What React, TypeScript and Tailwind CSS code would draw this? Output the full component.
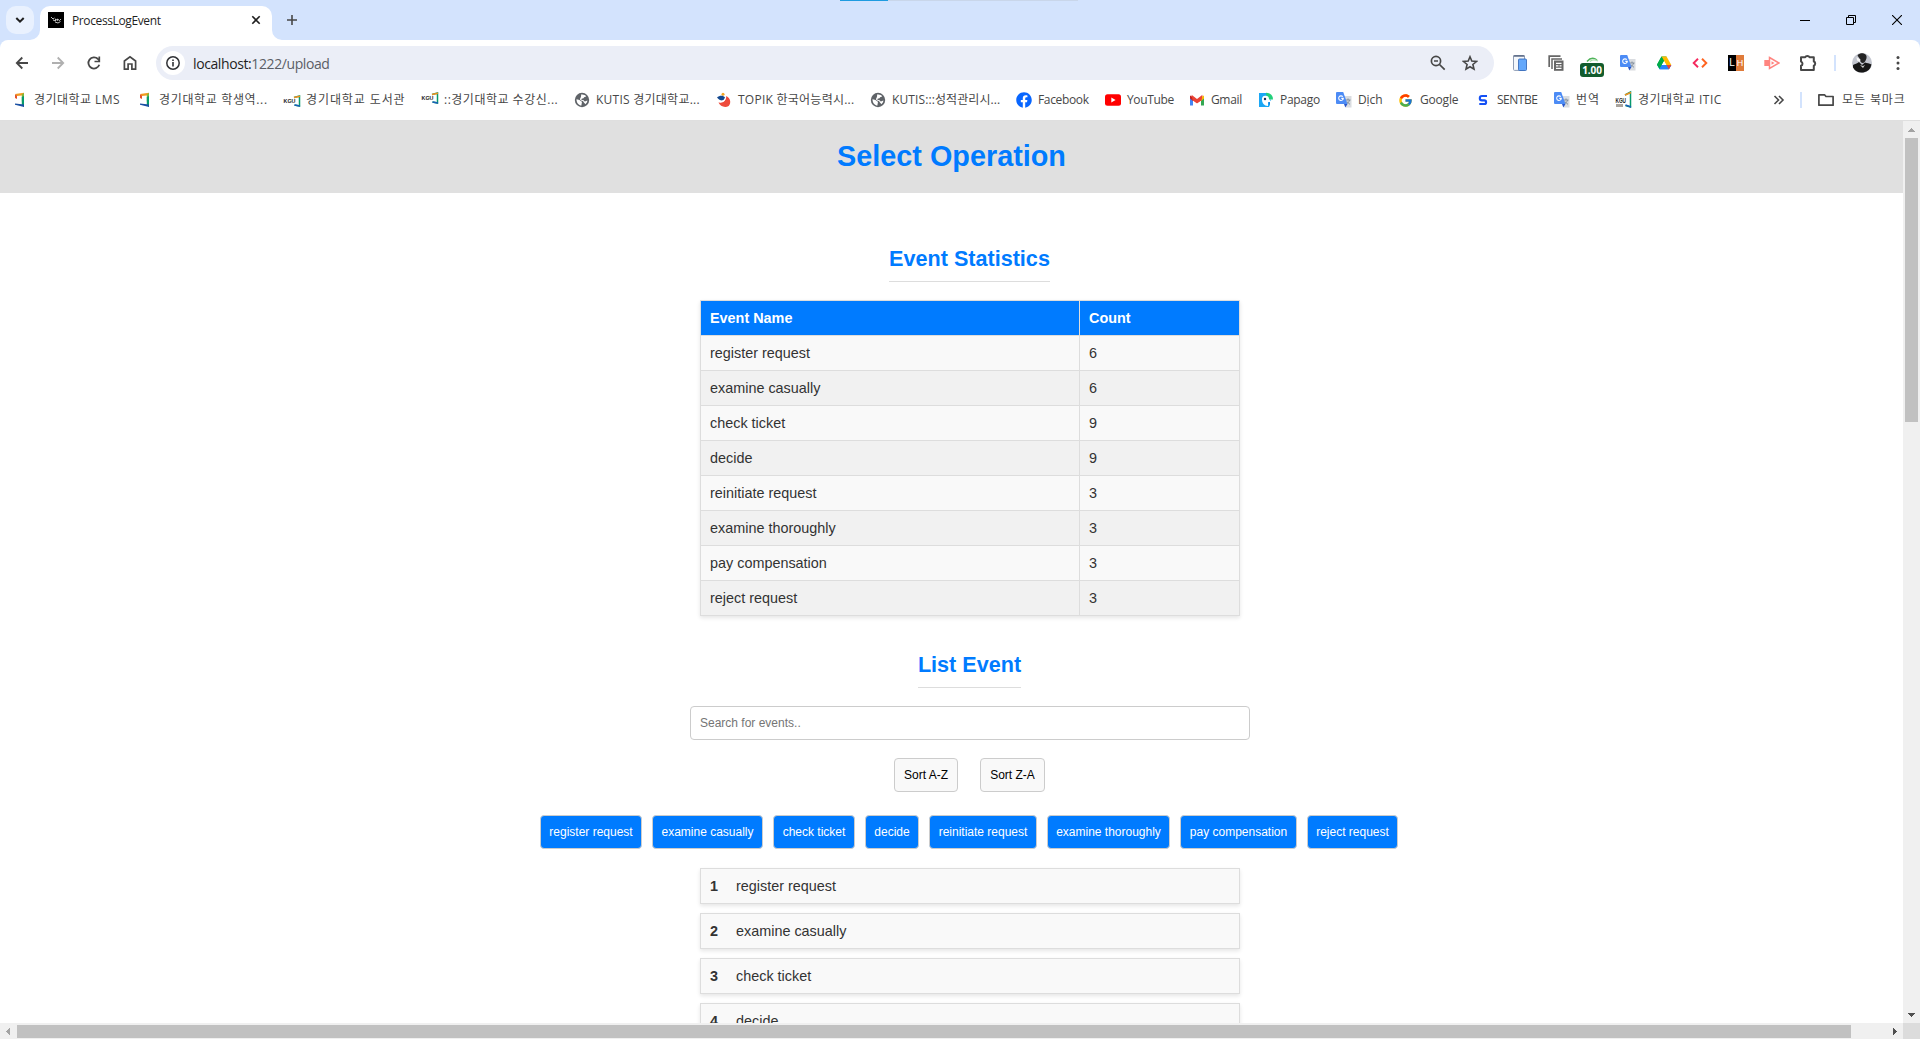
import React from "react";
import { FaFacebook } from "react-icons/fa";
import { FcGoogle } from "react-icons/fc";

const UI = "font-['Open_Sans','Noto_Sans_CJK_KR',sans-serif]";

function Svg({ s = 16, vb = "0 0 16 16", children }: { s?: number; vb?: string; children: React.ReactNode }) {
  return (
    <svg width={s} height={s} viewBox={vb} fill="none" className="block shrink-0">
      {children}
    </svg>
  );
}

function KguMark() {
  return (
    <Svg>
      <path d="M3 2 12 .8v2.4L5 4z" fill="#f39a1f" />
      <path d="M3 2.2 5 3.6V7L3 6z" fill="#e2522b" />
      <path d="M9.800 2.400 12 1v9l-2.200-.5z" fill="#79b83c" />
      <path d="M9.800 5 12 4V15l-2.200-2z" fill="#079a6c" />
      <path d="M3 11.500 12 12.600V15L3 12.800z" fill="#1a4fa3" />
    </Svg>
  );
}

function KguText({ variant }: { variant: "low" | "high" | "tall" }) {
  const tall = variant === "tall";
  const y = variant === "high" ? -3 : 0;
  return (
    <svg width="16" height="16" viewBox="0 0 16 16" className="block shrink-0 overflow-visible">
      <g transform={`translate(0 ${y})`}>
        <text x="-.5" y={tall ? 10.5 : 10.6} fontSize={tall ? 6.5 : 5} fontWeight="900" textLength={tall ? 10.5 : 12} lengthAdjust="spacingAndGlyphs" fill="#222" fontFamily="Liberation Sans">
          KGU
        </text>
        {tall && <rect x="0" y="12" width="7" height="3" fill="#a9a39c" />}
        <path d={tall ? "M9 3 14.500 0v15l-5-1.500" : "M10 5.500 15.500 4v10l-5-1"} fill="none" stroke="#079a6c" strokeWidth="1.500" />
        <path d={tall ? "M9 3 15 .5" : "M10 5.500 16 4.200"} stroke="#f0901f" strokeWidth="1.500" />
        <path d={tall ? "M9.500 13 15 15" : "M10.500 13 16 14"} stroke="#1a5fb8" strokeWidth="1.500" />
      </g>
    </svg>
  );
}

function Globe() {
  return (
    <Svg>
      <circle cx="8" cy="8" r="7.2" fill="#5f6368" />
      <path d="M2.500 7.200c1.500.3 3 .4 3.600 1.400.5 1 1.800.6 1.800 1.700 0 1-.5 1.600-.4 3.200C5 13.500 2.400 11 2.500 7.200z" fill="#fff" />
      <path d="M7 2.600c2-.6 4.200.3 5.200 1.600-.8.8-2.200.6-2.400 1.600-.2.9-1.800.4-2.300 1.100-.6.7.3 1 1.300 1 1.400 0 1.200 1.500 2.200 1.500.8 0 1.300-.8 2.400-.9-.2 1.600-1 3-2.200 3.800-.3-1.500-1.300-1.300-1.700-2.600-.5-1.200-2.600-.5-3.300-1.900C5.500 6.400 7.700 5.400 7 2.600z" fill="#fff" />
    </Svg>
  );
}

function Topik() {
  return (
    <Svg>
      <circle cx="7" cy="2.200" r="1.500" fill="#f5a623" />
      <path d="M1 5.500C3.500 3 7.500 3.200 9 5.500 8.500 9.500 4 9.500 1 5.500z" fill="#12478f" />
      <path d="M2.500 10.500c4.500.7 7.500-1.200 7.800-6.500C14.500 6 15.500 11 12.700 14 9 16 4 14.500 2.500 10.500z" fill="#ee4b3c" />
      <path d="M3.500 9.700c3 .3 5.500-1.200 6.200-4.500" stroke="#fff" strokeWidth="1.100" />
    </Svg>
  );
}

function Youtube() {
  return (
    <Svg>
      <rect x="0" y="2.300" width="16" height="11.400" rx="2.500" fill="#f00" />
      <path d="M6.300 5.600v4.800L10.600 8z" fill="#fff" />
    </Svg>
  );
}

function Gmail() {
  return (
    <Svg>
      <path d="M1 4v9.500h3V7.500z" fill="#4285f4" />
      <path d="M15 4v9.500h-3V7.500z" fill="#34a853" />
      <path d="M1 3.500 4 5v4L1 6.500z" fill="#c5221f" />
      <path d="M15 3.500 12 5v4l3-2.500z" fill="#fbbc04" />
      <path d="M2.500 2.700 8 7l5.500-4.300L12.500 8.500 8 11.500 3.700 8.500z" fill="#ea4335" />
      <path d="M4 8.900V13.500H12V8.900L8 12z" fill="#fff" />
    </Svg>
  );
}

function Papago() {
  return (
    <Svg>
      <path d="M1 1h8l1.500 3L13.500 9.500 11 15H1z" fill="#1ba7f5" />
      <path d="M8 .8c4 0 7 2.500 7 6.700H9z" fill="#22d07a" />
      <path d="M4 7.500A3.500 3.500 0 0 1 11 7l2.500 2.700-3.500.6V14C6 14 4 11 4 7.500z" fill="#fff" />
      <circle cx="7" cy="7" r="1.200" fill="#1c2f5a" />
      <path d="m10 10.500 3.500-.6-1 3.600z" fill="#127de0" />
      <path d="M12 9.500 16 8v8h-4z" fill="#fff" />
    </Svg>
  );
}

function Translate() {
  return (
    <Svg>
      <path d="M6 4h9.500v11.500H10z" fill="#d9dce0" />
      <path d="M9.500 8h5M12 6.500V8M13.600 8c-.6 2-2 3.300-3.200 4M11 9.500c.7 1.200 1.700 2 3 2.800" stroke="#7b8794" strokeWidth=".9" />
      <path d="M1 0h6.200L11.500 12H1a1 1 0 0 1-1-1V1a1 1 0 0 1 1-1z" fill="#4c8bf5" />
      <path d="M8 12h3.500L9.300 15.500z" fill="#2a56c6" />
      <path d="M6.800 4.700A2.300 2.300 0 1 0 7.300 6.400H5.300" stroke="#fff" strokeWidth="1.100" />
    </Svg>
  );
}

function Sentbe() {
  return (
    <Svg>
      <path d="M12 4H7a2.200 2.200 0 0 0 0 4.400h2.300a1.800 1.800 0 0 1 0 3.600H4.300" stroke="#1450f5" strokeWidth="2.100" />
    </Svg>
  );
}

const bookmarks: { w: string; t: string; label: string; icon: React.ReactNode }[] = [
  { w: "w-[125px]", t: "tracking-[0.45px]", label: "경기대학교 LMS", icon: <KguMark /> },
  { w: "w-[147px]", t: "tracking-[0.65px]", label: "경기대학교 학생역...", icon: <KguMark /> },
  { w: "w-[138px]", t: "tracking-[0.9px]", label: "경기대학교 도서관", icon: <KguText variant="low" /> },
  { w: "w-[152px]", t: "tracking-[0.5px]", label: "::경기대학교 수강신...", icon: <KguText variant="high" /> },
  { w: "w-[142px]", t: "tracking-[0.25px]", label: "KUTIS 경기대학교...", icon: <Globe /> },
  { w: "w-[154px]", t: "tracking-[0.25px]", label: "TOPIK 한국어능력시...", icon: <Topik /> },
  { w: "w-[146px]", t: "tracking-[0.1px]", label: "KUTIS:::성적관리시...", icon: <Globe /> },
  { w: "w-[89px]", t: "tracking-[-0.35px]", label: "Facebook", icon: <FaFacebook size={16} color="#0866ff" className="shrink-0" /> },
  { w: "w-[84px]", t: "tracking-[-0.35px]", label: "YouTube", icon: <Youtube /> },
  { w: "w-[69px]", t: "tracking-[-0.35px]", label: "Gmail", icon: <Gmail /> },
  { w: "w-[78px]", t: "tracking-[-0.3px]", label: "Papago", icon: <Papago /> },
  { w: "w-[62px]", t: "tracking-[-0.1px]", label: "Dịch", icon: <Translate /> },
  { w: "w-[77px]", t: "tracking-[-0.2px]", label: "Google", icon: <FcGoogle size={15} className="mr-px shrink-0" /> },
  { w: "w-[79px]", t: "tracking-[-0.5px]", label: "SENTBE", icon: <Sentbe /> },
  { w: "w-[62px]", t: "tracking-[1px]", label: "번역", icon: <Translate /> },
  { w: "w-[110px]", t: "tracking-[0.45px]", label: "경기대학교 ITIC", icon: <KguText variant="tall" /> },
];

const extensions: React.ReactNode[] = [
  <Svg>
    <rect x="1.500" y=".6" width="11" height="14.800" rx="1" fill="#f4f7fb" stroke="#8f9db5" />
    <path d="M1.500 1h11" stroke="#3f4f6d" strokeWidth="1.200" />
    <rect x="6.500" y="4" width="8" height="11.500" rx="1" fill="#64a8fb" stroke="#3a6dbb" strokeWidth=".9" />
  </Svg>,
  <Svg>
    <path d="M1.200 12V1.200H12.500" stroke="#666" strokeWidth="1.700" />
    <path d="M4 14V4H14" stroke="#666" strokeWidth="1.500" />
    <rect x="6" y="5.500" width="9.500" height="10.300" fill="#666" />
    <path d="M8 8.300h5.500M8 10.800h2.500M8 13.300h5.500M11.500 10.800h2" stroke="#fff" strokeWidth="1.200" />
  </Svg>,
  <div className="relative h-4 w-4">
    <Svg>
      <path d="M3 6.500c3-3.500 6-4.500 10-1.500" stroke="#4fb35a" strokeWidth="1.500" />
      <path d="M6 6.500c2-2 4-2.500 8-.5" stroke="#a9dfac" strokeWidth="1.300" />
    </Svg>
    <div className="absolute top-2 -left-1 flex h-[14px] w-6 items-center justify-center rounded-[3px] bg-[#125c2d] font-['Open_Sans',sans-serif] text-[10px] font-bold tracking-[-0.1px] text-white">1.00</div>
  </div>,
  <Translate />,
  <Svg>
    <path d="M5.500 1.500h5L8 6 3.700 13.500 1 9.500z" fill="#00ac47" />
    <path d="M5.500 1.500h5L15.300 10h-5z" fill="#ffba00" />
    <path d="M1 9.800 3.500 14.200h9.400L15.300 10H6z" fill="#2684fc" />
    <path d="M5.500 1.500 1 9.700l2.500 4.300L8 6z" fill="#00ac47" />
    <path d="M3.500 14.200 6 10h9.300l-2.400 4.200z" fill="#2684fc" />
    <path d="M10.500 10h4.800l-2.400 4.200z" fill="#ea4335" />
    <path d="m8 6.200 2.200 3.800H5.800z" fill="#fff" />
  </Svg>,
  <Svg>
    <path d="M6 3.800 1.700 8 6 12.200" stroke="#f5295d" strokeWidth="1.900" />
    <path d="M10 3.800 14.300 8 10 12.200" stroke="#ff6420" strokeWidth="1.900" />
  </Svg>,
  <div className="flex h-4 w-4 font-['Liberation_Sans',sans-serif] text-[10px] leading-4">
    <span className="w-2 bg-black text-center text-white">L</span>
    <span className="w-2 bg-[#df7b3a] text-center text-[9px] text-white">H</span>
  </div>,
  <Svg>
    <rect x=".3" y="5" width="5" height="6" fill="#ff8580" />
    <path d="M5.500 2.500 15 8l-9.500 5.500z" stroke="#ff8580" strokeWidth="1.500" />
    <path d="M7.500 6.300 10.500 8l-3 1.700z" fill="#ff8580" />
  </Svg>,
  <Svg s={20} vb="0 0 20 20">
    <path d="M3 4.200h4.200a2.300 2 0 0 1 4.300 0h4.300v4.300a2 2.200 0 0 1 0 4.200V17H3v-4.200a2.300 2.300 0 0 0 0-4.300z" stroke="#474747" strokeWidth="2" strokeLinejoin="round" />
  </Svg>,
];

const stats: [string, number][] = [
  ["register request", 6],
  ["examine casually", 6],
  ["check ticket", 9],
  ["decide", 9],
  ["reinitiate request", 3],
  ["examine thoroughly", 3],
  ["pay compensation", 3],
  ["reject request", 3],
];

const listed = stats.slice(0, 4);

const buttonWidths = ["w-[102px]", "w-[111px]", "w-[82px]", "w-[54px]", "w-[108px]", "w-[123px]", "w-[117px]", "w-[91px]"];

function TabStrip() {
  return (
    <div className="relative flex h-10 bg-[#d3e3fd]">
      <div className="mt-[6px] ml-[6px] flex h-7 w-7 items-center justify-center rounded-[10px] bg-[#e9f1fe]">
        <Svg s={10} vb="0 0 10 10">
          <path d="M1.300 3 5 6.700 8.700 3" stroke="#1f1f1f" strokeWidth="2" />
        </Svg>
      </div>
      <div className="relative mt-[6px] ml-[6px] flex h-[34px] w-[232px] items-center rounded-t-[10px] bg-white pr-[10px] pb-[6px] pl-2">
        <svg className="absolute bottom-0 -left-[10px]" width="10" height="10">
          <path d="M10 0v10H0A10 10 0 0 0 10 0z" fill="#fff" />
        </svg>
        <svg className="absolute -right-[10px] bottom-0" width="10" height="10">
          <path d="M0 0v10h10A10 10 0 0 1 0 0z" fill="#fff" />
        </svg>
        <Svg>
          <path d="M0 0h16v16H0z" fill="#000" />
          <path d="m3 5 2 2 1.500-1M5 8l2.500 1V7l2 1.500V7l2 1.500L13 7M7 10l3 1 2.500-1.500" stroke="#d9d9d9" strokeWidth=".9" />
        </Svg>
        <span className="ml-2 flex-1 pt-px text-[12px] leading-4 tracking-[-0.38px] text-[#1f1f1f]">ProcessLogEvent</span>
        <Svg s={12} vb="0 0 12 12">
          <path d="m2.300 2.300 7.400 7.400M9.700 2.300 2.300 9.700" stroke="#1f1f1f" strokeWidth="1.600" />
        </Svg>
      </div>
      <div className="ml-[14px] flex w-3 items-center">
        <Svg s={12} vb="0 0 12 12">
          <path d="M6 1v10M1 6h10" stroke="#474747" strokeWidth="1.600" />
        </Svg>
      </div>
      <div className="absolute top-0 left-[840px] flex h-px w-[238px] bg-[#c9d6ea]">
        <div className="w-12 bg-[#1e9be0]" />
      </div>
      <div className="ml-auto flex items-center">
        <div className="flex w-[46px] justify-center">
          <div className="h-px w-[10px] bg-black" />
        </div>
        <div className="flex w-[46px] justify-center">
          <Svg s={10} vb="0 0 10 10">
            <path d="M.5 2.500h7v7h-7zM2.500 2.500v-2h7v7h-2" stroke="#000" />
          </Svg>
        </div>
        <div className="flex w-[46px] justify-center">
          <Svg s={10} vb="0 0 10 10">
            <path d="m0 0 10 10M10 0 0 10" stroke="#000" strokeWidth="1.100" />
          </Svg>
        </div>
      </div>
    </div>
  );
}

function Cell({ children }: { children: React.ReactNode }) {
  return <div className="flex w-9 shrink-0 items-center justify-center">{children}</div>;
}

function Toolbar() {
  return (
    <div className="bg-[#d3e3fd]">
      <div className="flex h-10 rounded-t-[8px] bg-white pt-[6px] pl-1">
        <Cell>
          <Svg>
            <path d="M14 8H3M8.300 2.500 2.800 8 8.300 13.500" stroke="#474747" strokeWidth="1.800" />
          </Svg>
        </Cell>
        <Cell>
          <Svg>
            <path d="M2 8h11M7.700 2.500 13.200 8 7.700 13.500" stroke="#b0b0b0" strokeWidth="1.800" />
          </Svg>
        </Cell>
        <Cell>
          <Svg>
            <path d="M13.300 9.800A5.600 5.600 0 1 1 12 4l1.300 1.500" stroke="#474747" strokeWidth="1.800" />
            <path d="M13.300 1.500v5H8.500" stroke="#474747" strokeWidth="1.700" />
          </Svg>
        </Cell>
        <Cell>
          <Svg>
            <path d="M2.400 14.200V6L8 1.800 13.600 6v8.200H9.900V9H6.100v5.200z" stroke="#474747" strokeWidth="1.700" />
          </Svg>
        </Cell>
        <div className="ml-2 flex h-[34px] w-[1338px] items-center rounded-full bg-[#ebeef7] pr-4 pl-[5px]">
          <div className="flex h-6 w-6 items-center justify-center rounded-full bg-white">
            <Svg>
              <circle cx="8" cy="8" r="6.200" stroke="#303236" strokeWidth="1.500" />
              <path d="M8 7v4.500M8 4.400V6" stroke="#303236" strokeWidth="1.600" />
            </Svg>
          </div>
          <div className="ml-2 text-[14px] tracking-[-0.4px] text-[#5b5e66]">
            <span className="text-[#1f1f1f]">localhost:</span>1222/upload
          </div>
          <div className="ml-auto flex items-center gap-4">
            <Svg>
              <circle cx="6" cy="6" r="4.600" stroke="#474747" strokeWidth="1.700" />
              <path d="M4 6h4M9.500 9.500l5.200 5.200" stroke="#474747" strokeWidth="1.700" />
            </Svg>
            <Svg>
              <path d="m8 1.800 1.800 4.300 4.700.4-3.600 3 1.100 4.600L8 11.700l-4 2.400 1.100-4.600-3.600-3 4.700-.4z" stroke="#474747" strokeWidth="1.600" />
            </Svg>
          </div>
        </div>
        <div className="ml-2 flex h-[34px]">
          {extensions.map((e, i) => (
            <Cell key={i}>{e}</Cell>
          ))}
        </div>
        <div className="mt-[9px] ml-2 h-4 w-[2px] bg-[#d3e3fd]" />
        <div className="ml-2 flex h-[34px]">
          <Cell>
            <Svg s={20} vb="0 0 20 20">
              <circle cx="10" cy="10" r="10" fill="#c3c6cf" />
              <path d="M1 12c2-1.500 4-1 6-3l3 3 3-2.500c2 .5 4 1 6.500 2A10 10 0 0 1 1 14.500z" fill="#171717" />
              <path d="M5.500 2.500C7 .5 9 .2 11 .3c3 .5 4 2.500 3.500 5C13.500 8.500 12.500 10 10.500 10 8.500 9.500 8 8 7.500 5.500z" fill="#242424" />
              <path d="m4.500 4 4 2.500-.5 2.500-3-1.500z" fill="#f4f4f4" />
              <path d="m8 12 3 1 2-1-2 3z" fill="#ccc" />
            </Svg>
          </Cell>
          <Cell>
            <Svg>
              <circle cx="8" cy="2.500" r="1.500" fill="#474747" />
              <circle cx="8" cy="8" r="1.500" fill="#474747" />
              <circle cx="8" cy="13.500" r="1.500" fill="#474747" />
            </Svg>
          </Cell>
        </div>
      </div>
    </div>
  );
}

function BookmarkBar() {
  return (
    <div className="flex h-10 items-center bg-white pl-[12px] text-[12px] text-[#474747]">
      {bookmarks.map((b, i) => (
        <div key={i} className={`flex shrink-0 items-center gap-[6px] ${b.w}`}>
          {b.icon}
          <span className={`leading-4 whitespace-nowrap ${b.t}`}>{b.label}</span>
        </div>
      ))}
      <div className="ml-auto flex items-center pr-[14px]">
        <Svg s={12} vb="0 0 12 12">
          <path d="m1.500 2 4 4-4 4M6 2l4 4-4 4" stroke="#474747" strokeWidth="1.600" />
        </Svg>
        <div className="ml-[15px] h-4 w-[2px] bg-[#d3e3fd]" />
        <div className="ml-4">
          <Svg>
            <path d="M.9 3v10.200h14.200V4.500H8L6.500 2.800H.9z" stroke="#474747" strokeWidth="1.700" strokeLinejoin="round" />
          </Svg>
        </div>
        <span className="ml-2 w-[64px] leading-4 tracking-[0.9px] whitespace-nowrap">모든 북마크</span>
      </div>
    </div>
  );
}

function Page() {
  return (
    <main className="h-full min-w-0 flex-1 overflow-hidden bg-white font-['Liberation_Sans',Arial,sans-serif] text-[14.4px] text-[#333]">
      <header className="flex h-[72px] justify-center bg-[#e0e0e0] pt-[19px] text-[28.8px] leading-[33px] font-bold text-[#007bff]">
        <h1>Select Operation</h1>
      </header>
      <div className="flex w-[1939px] flex-col items-center pt-[53px]">
        <h2 className="border-b border-[#ddd] pb-[10px] text-[21.6px] leading-[25px] font-bold text-[#007bff]">Event Statistics</h2>
        <table className="mt-[18px] mr-[-1px] w-[540px] table-fixed border-collapse text-left shadow-[0_2px_4px_rgba(0,0,0,0.1)]">
          <colgroup>
            <col className="w-[379px]" />
            <col />
          </colgroup>
          <thead>
            <tr className="h-[35px] bg-[#007bff] text-white">
              <th className="border border-[#ddd] px-[9px] pt-[2px] pb-0 font-bold">Event Name</th>
              <th className="border border-[#ddd] px-[9px] pt-[2px] pb-0 font-bold">Count</th>
            </tr>
          </thead>
          <tbody>
            {stats.map(([name, n]) => (
              <tr key={name} className="h-[35px] bg-[#f9f9f9] even:bg-[#f1f1f1]">
                <td className="border border-[#ddd] px-[9px] pt-[2px] pb-0">{name}</td>
                <td className="border border-[#ddd] px-[9px] pt-[2px] pb-0">{n}</td>
              </tr>
            ))}
          </tbody>
        </table>
        <h2 className="mt-[36px] border-b border-[#ddd] pb-[10px] text-[21.6px] leading-[25px] font-bold text-[#007bff]">List Event</h2>
        <input
          className="mt-[18px] mr-[-1px] h-[34px] w-[560px] rounded-[4px] border border-[#ccc] bg-white px-[9px] text-[12px] placeholder:text-[#757575]"
          placeholder="Search for events.."
        />
        <div className="mt-[18px] flex h-[34px] gap-[22px] text-[12px] text-black">
          <button className="w-16 rounded-[4px] border border-[#ccc] bg-[#f9f9f9] whitespace-nowrap">Sort A-Z</button>
          <button className="w-[65px] rounded-[4px] border border-[#ccc] bg-[#f9f9f9] whitespace-nowrap">Sort Z-A</button>
        </div>
        <div className="mt-[23px] mr-px flex h-[34px] gap-[10px] text-[12px] text-white">
          {stats.map(([name], i) => (
            <button key={name} className={`rounded-[4px] border border-[#ccc] bg-[#007bff] whitespace-nowrap ${buttonWidths[i]}`}>
              {name}
            </button>
          ))}
        </div>
        <ol className="mt-[19px] mr-[-1px] flex w-[540px] flex-col gap-[9px]">
          {listed.map(([name], i) => (
            <li key={name} className="flex h-9 items-center border border-[#ddd] bg-[#f9f9f9] px-[9px] pt-[2px] shadow-[0_2px_4px_rgba(0,0,0,0.1)]">
              <b className="w-[26px]">{i + 1}</b>
              <span>{name}</span>
            </li>
          ))}
        </ol>
      </div>
    </main>
  );
}

export default function App() {
  return (
    <div className={`flex h-[1039px] w-[1920px] flex-col overflow-hidden bg-white ${UI}`}>
      <TabStrip />
      <Toolbar />
      <BookmarkBar />
      <div className="h-px shrink-0 bg-[#dfdfdf]" />
      <div className="flex h-[902px] shrink-0">
        <Page />
        <div className="flex w-[17px] flex-col items-center bg-[#f0f0f0]">
          <svg width="17" height="17" className="shrink-0" shapeRendering="crispEdges">
            <path d="M5 11h7L8.500 7z" fill="#a3a3a3" />
          </svg>
          <div className="h-[284px] w-[13px] bg-[#c1c1c1]" />
          <svg width="17" height="17" className="mt-auto shrink-0" shapeRendering="crispEdges">
            <path d="M5 7h7l-3.500 4z" fill="#505050" />
          </svg>
        </div>
      </div>
      <div className="flex h-4 shrink-0 bg-[#f0f0f0]">
        <svg width="17" height="16" shapeRendering="crispEdges">
          <path d="M10 5v7L6 8.500z" fill="#a3a3a3" />
        </svg>
        <div className="mt-[2px] h-[13px] w-[1834px] bg-[#c1c1c1]" />
        <svg width="17" height="16" className="ml-auto" shapeRendering="crispEdges">
          <path d="M7 5v7l4-3.500z" fill="#505050" />
        </svg>
        <div className="w-[17px] bg-[#dcdcdc]" />
      </div>
    </div>
  );
}
